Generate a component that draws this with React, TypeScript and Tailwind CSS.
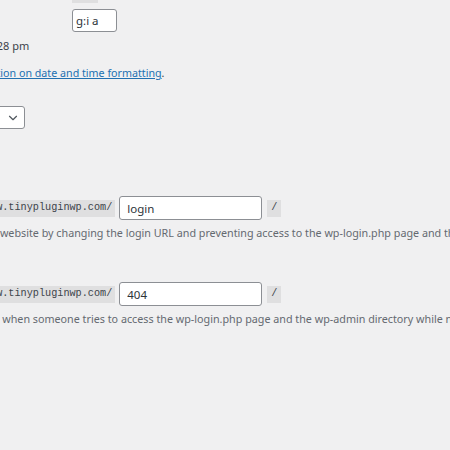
import React from 'react';
import { ChevronDown } from 'lucide-react';

// WP admin "General settings" time block followed by the login-URL plugin fields.
// The page is scrolled sideways, so the table cell starts left of the viewport.

const SITE_URL = 'https://www.tinypluginwp.com/';

const Radio = ({ checked = false }: { checked?: boolean }) => (
  <span className="mr-[4px] flex h-[13px] w-[13px] shrink-0 items-center justify-center rounded-full border border-[#8c8f94] bg-white">
    {checked && <span className="h-[6px] w-[6px] rounded-full bg-[#3582c4]" />}
  </span>
);

const Code = ({ children, className = '' }: { children: React.ReactNode; className?: string }) => (
  <code
    className={`inline-flex h-[17px] shrink-0 items-center bg-[#dfdfe0] font-['Liberation_Mono',monospace] text-[10.2px] text-[#3c434a] ${className}`}
  >
    {children}
  </code>
);

const SlugField = ({ value, description }: { value: string; description: string }) => (
  <>
    <div className="flex h-[24px] items-center">
      <Code className="px-[3px]">{SITE_URL}</Code>
      <input
        readOnly
        value={value}
        className="ml-[4px] h-[24px] w-[143px] shrink-0 rounded-[3px] border border-[#8c8f94] bg-white px-[7px] font-['Noto_Sans',sans-serif] text-[11.5px] text-[#2c3338] outline-none"
      />
      <Code className="ml-[5px] px-[4px]">/</Code>
    </div>
    <p className="mt-[5px] whitespace-nowrap pl-[3px] text-[10.75px] leading-[16px] text-[#646970]">{description}</p>
  </>
);

export default function App() {
  return (
    <div className="h-[450px] w-[450px] overflow-hidden bg-[#f0f0f1] font-['Noto_Sans',sans-serif] text-[#3c434a]">
      <div className="-ml-[68px] flex flex-col">
        {/* time format options */}
        <label className="-mt-[16px] flex h-[20px] items-center">
          <Radio />
          <span className="w-[123px] shrink-0 text-[11px]">15:28</span>
          <Code className="px-[4px]">H:i</Code>
        </label>
        <div className="mt-[5px] flex h-[23px] items-center">
          <Radio checked />
          <span className="w-[123px] shrink-0 text-[11px]">Custom:</span>
          <input
            readOnly
            value="g:i a"
            className="h-[23px] w-[45px] shrink-0 rounded-[3px] border border-[#8c8f94] bg-white px-[3px] text-[11.5px] text-[#2c3338] outline-none"
          />
        </div>
        <p className="mt-[6px] whitespace-nowrap text-[11px] leading-[16px]">
          <strong className="font-bold">Preview:</strong> 12:28 pm
        </p>
        <p className="mt-[11px] whitespace-nowrap pl-[6px] text-[10.7px] leading-[16px]">
          <a href="#" className="text-[#2271b1] underline">
            Documentation on date and time formatting
          </a>
          .
        </p>

        {/* week starts on */}
        <div className="mt-[25px] flex h-[23px] w-[93px] items-center justify-between rounded-[3px] border border-[#8c8f94] bg-white pl-[7px] pr-[4px] text-[11.5px] text-[#2c3338]">
          <span>Monday</span>
          <ChevronDown size={14} strokeWidth={2} className="text-[#50575e]" />
        </div>

        {/* login url plugin */}
        <div className="mt-[67px]">
          <SlugField
            value="login"
            description="Protect your website by changing the login URL and preventing access to the wp-login.php page and the wp-admin directory to non-connected people."
          />
        </div>
        <div className="mt-[41px]">
          <SlugField
            value="404"
            description="Redirect URL when someone tries to access the wp-login.php page and the wp-admin directory while not logged in."
          />
        </div>
      </div>
    </div>
  );
}
